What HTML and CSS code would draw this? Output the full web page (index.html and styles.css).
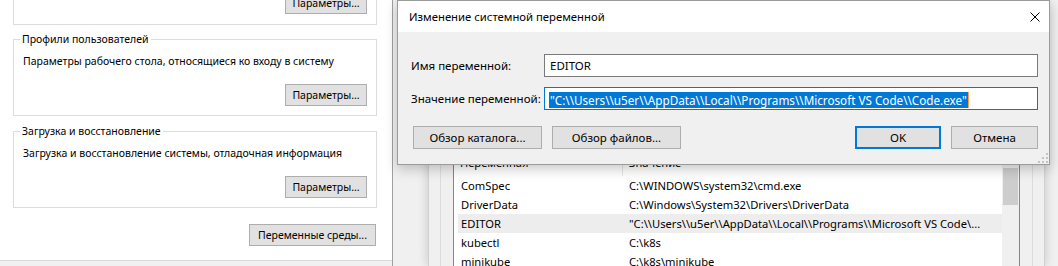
FILE: index.html
```html
<!DOCTYPE html>
<html lang="ru">
<head>
    <meta charset="UTF-8">
    <title>Изменение системной переменной</title>
    <link rel="stylesheet" href="styles.css">
</head>
<body>
    <div class="desk">
        <div class="sys">
            <div class="page">
                <fieldset class="group first">
                    <div class="actions"><button class="btn">Параметры...</button></div>
                </fieldset>

                <fieldset class="group">
                    <legend>Профили пользователей</legend>
                    <p class="desc">Параметры рабочего стола, относящиеся ко входу в систему</p>
                    <div class="actions"><button class="btn">Параметры...</button></div>
                </fieldset>

                <fieldset class="group">
                    <legend>Загрузка и восстановление</legend>
                    <p class="desc">Загрузка и восстановление системы, отладочная информация</p>
                    <div class="actions"><button class="btn">Параметры...</button></div>
                </fieldset>

                <div class="env-row">
                    <button class="btn wide">Переменные среды...</button>
                </div>
            </div>
        </div>

        <div class="env">
            <div class="env-win">
                <div class="env-group">
                    <div class="list">
                        <div class="list-body">
                            <div class="list-head">
                                <span class="head-name">Переменная</span>
                                <span class="head-value">Значение</span>
                            </div>
                            <div class="row">
                                <span class="name">ComSpec</span>
                                <span class="value">C:\WINDOWS\system32\cmd.exe</span>
                            </div>
                            <div class="row">
                                <span class="name">DriverData</span>
                                <span class="value">C:\Windows\System32\Drivers\DriverData</span>
                            </div>
                            <div class="row selected">
                                <span class="name">EDITOR</span>
                                <span class="value">"C:\\Users\\u5er\\AppData\\Local\\Programs\\Microsoft VS Code\...</span>
                            </div>
                            <div class="row">
                                <span class="name">kubectl</span>
                                <span class="value">C:\k8s</span>
                            </div>
                            <div class="row">
                                <span class="name">minikube</span>
                                <span class="value">C:\k8s\minikube</span>
                            </div>
                        </div>
                        <div class="vscroll"><div class="thumb"></div></div>
                    </div>
                </div>
            </div>
        </div>
    </div>

    <div class="dialog">
        <div class="titlebar">
            <span class="title">Изменение системной переменной</span>
            <span class="close">
                <svg width="10" height="10" viewBox="0 0 10 10">
                    <path d="M0.5 0.5L9.5 9.5M9.5 0.5L0.5 9.5" stroke="#000" stroke-width="1"/>
                </svg>
            </span>
        </div>

        <div class="dlg-body">
            <div class="fields">
                <label class="label">Имя переменной:</label>
                <div class="field">EDITOR</div>
                <label class="label">Значение переменной:</label>
                <div class="field focus"><span class="sel-text">"C:\\Users\\u5er\\AppData\\Local\\Programs\\Microsoft VS Code\\Code.exe"</span><span class="caret"></span></div>
            </div>

            <div class="dlg-actions">
                <button class="btn browse">Обзор каталога...</button>
                <button class="btn browse">Обзор файлов...</button>
                <button class="btn ok">OK</button>
                <button class="btn cancel">Отмена</button>
            </div>
        </div>

        <svg class="grip" width="10" height="10" viewBox="0 0 10 10">
            <rect x="8" y="0" width="2" height="2" fill="#c4c4c4"/>
            <rect x="8" y="4" width="2" height="2" fill="#c4c4c4"/>
            <rect x="4" y="4" width="2" height="2" fill="#c4c4c4"/>
            <rect x="8" y="8" width="2" height="2" fill="#c4c4c4"/>
            <rect x="4" y="8" width="2" height="2" fill="#c4c4c4"/>
            <rect x="0" y="8" width="2" height="2" fill="#c4c4c4"/>
        </svg>
    </div>
</body>
</html>
```

FILE: styles.css
```css
* {
    box-sizing: border-box;
}

body {
    margin: 0;
    width: 1058px;
    height: 266px;
    overflow: hidden;
    position: relative;
    background: #F0F0F0;
    color: #000;
    font-family: "Noto Sans", sans-serif;
    font-size: 11px;
    line-height: 16px;
}

.desk {
    display: flex;
    height: 266px;
    overflow: hidden;
}

/* system properties tab page */

.sys {
    width: 393px;
    flex: none;
    font-size: 10.5px;
    border-right: 1px solid #A0A0A0;
    background: #F0F0F0;
}

.page {
    display: flow-root;
    height: 261px;
    padding-left: 13px;
    background: #fff;
    border-bottom: 1px solid #D9D9D9;
}

.group {
    width: 364px;
    min-width: 0;
    margin: 7px 0 0;
    padding: 0 9px 9px;
    border: 1px solid #DCDCDC;
}

.group.first {
    margin-top: -10px;
    padding-bottom: 10px;
}

.group.first .actions {
    margin-top: 1px;
}

.group.first + .group {
    margin-top: 6px;
}

.group legend {
    margin-left: -3px;
    padding: 0 2px;
    line-height: 16px;
}

.desc {
    margin: 6px 0 0;
}

.actions {
    display: flex;
    justify-content: flex-end;
    margin-top: 15px;
}

.btn {
    height: 22px;
    width: 82px;
    padding: 0;
    background: #E1E1E1;
    border: 1px solid #ADADAD;
    color: #000;
    font: inherit;
}

.env-row {
    display: flex;
    justify-content: flex-end;
    width: 363px;
    margin-top: 16px;
}

.btn.wide {
    width: 127px;
}

/* environment variables window behind */

.env {
    flex: 1;
    display: flex;
    padding: 0 13px 0 35px;
    font-size: 11.2px;
}

.env-win {
    flex: 1;
    padding: 20px 11px 0;
    background: #F0F0F0;
    border-left: 1px solid #D0D0D0;
    border-right: 1px solid #D0D0D0;
    box-shadow: 0 0 10px rgba(0, 0, 0, 0.18);
}

.env-group {
    height: 300px;
    padding: 0 12px;
    border: 1px solid #DCDCDC;
}

.list {
    display: flex;
    height: 200px;
    margin-top: 131px;
    background: #fff;
    border: 1px solid #828790;
}

.list-body {
    flex: 1;
    min-width: 0;
}

.list-head {
    display: flex;
    height: 23px;
    line-height: 20px;
}

.head-name {
    width: 169px;
    padding-left: 6px;
    border-right: 1px solid #E5E5E5;
}

.head-value {
    padding-left: 6px;
}

.row {
    display: flex;
    height: 19px;
    margin-left: 4px;
    line-height: 19px;
    white-space: nowrap;
}

.row.selected {
    background: #EDEDED;
}

.row .name {
    width: 171px;
    flex: none;
    padding-left: 3px;
}

.row .value {
    overflow: hidden;
}

.vscroll {
    width: 17px;
    flex: none;
    padding: 15px 1px 0;
    background: #F0F0F0;
}

.thumb {
    height: 37px;
    background: #CDCDCD;
}

/* edit dialog */

.dialog {
    position: absolute;
    left: 397px;
    top: 0;
    width: 653px;
    height: 165px;
    font-size: 11.5px;
    background: #F0F0F0;
    border: 1px solid #9B9B9B;
    box-shadow: 0 4px 12px rgba(0, 0, 0, 0.22);
}

.titlebar {
    display: flex;
    align-items: center;
    justify-content: space-between;
    height: 31px;
    padding-left: 11px;
    background: #fff;
}

.title {
    font-size: 11.3px;
}

.close {
    display: flex;
    align-items: center;
    justify-content: center;
    width: 28px;
    height: 31px;
}

.dlg-body {
    padding: 22px 11px 0 13px;
}

.fields {
    display: grid;
    grid-template-columns: 133px 494px;
    row-gap: 10px;
    align-items: center;
}

.field {
    height: 23px;
    padding: 0 5px;
    background: #fff;
    border: 1px solid #7A7A7A;
    line-height: 21px;
    white-space: nowrap;
    overflow: hidden;
}

.field.focus {
    padding-left: 4px;
    border-color: #0078D7;
}

.sel-text {
    display: inline-block;
    padding: 0 1px;
    font-size: 11.7px;
    line-height: 16px;
    background: #0078D7;
    color: #fff;
    vertical-align: middle;
}

.caret {
    display: inline-block;
    width: 1px;
    height: 16px;
    background: #F7A146;
    vertical-align: middle;
}

.dlg-actions {
    display: flex;
    gap: 10px;
    margin-top: 16px;
    padding-left: 2px;
}

.dlg-actions .btn {
    height: 23px;
}

.btn.browse {
    width: 129px;
}

.btn.ok {
    width: 86px;
    margin-left: auto;
    border: 2px solid #0078D7;
}

.btn.cancel {
    width: 87px;
}

.grip {
    position: absolute;
    right: 1px;
    bottom: 1px;
}
```
